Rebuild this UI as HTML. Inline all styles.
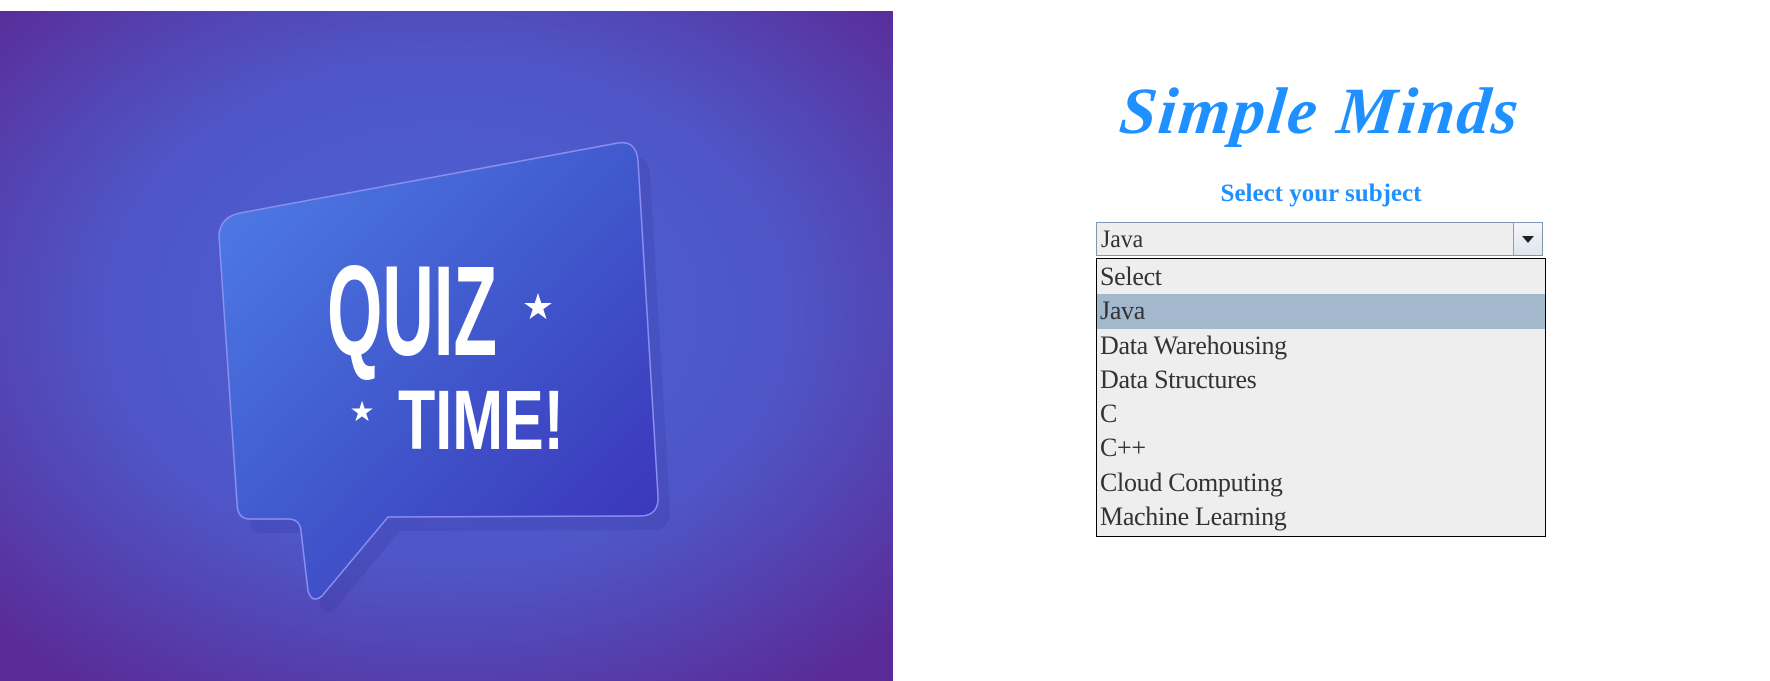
<!DOCTYPE html>
<html><head><meta charset="utf-8"><style>
html,body{margin:0;padding:0;background:#fff;width:1770px;height:681px;overflow:hidden;position:relative}
#img{position:absolute;left:0;top:11px}
.t{position:absolute;font-family:"Liberation Serif",serif}
#title{left:1110px;top:74px;width:420px;text-align:center;color:#1e90ff;font-size:66px;font-style:italic;font-weight:bold;letter-spacing:2px;transform:skewX(-6deg)}
#sub{left:1096px;top:180px;width:450px;text-align:center;color:#1e90ff;font-size:25px;font-weight:bold}
#combo{position:absolute;left:1096px;top:222px;width:447px;height:34px;background:#eeeeee;border:1px solid #7f97b3;box-sizing:border-box}
#combo span{position:absolute;left:4px;top:3px;font:25px "Liberation Serif",serif;color:#333;transform:scaleX(0.95);transform-origin:left}
#btn{position:absolute;right:0;top:0;width:28px;height:32px;border-left:1px solid #8aa0b8;background:linear-gradient(#f4f6f9,#dfe6ee)}
#btn:after{content:"";position:absolute;left:8px;top:13px;border-left:6px solid transparent;border-right:6px solid transparent;border-top:7px solid #222}
#list{position:absolute;left:1096px;top:258px;width:450px;height:279px;background:#eeeeee;border:1px solid #000;box-sizing:border-box;padding-top:1px}
#list div{height:34.3px;font:26px/34px "Liberation Serif",serif;color:#333;padding-left:3px;letter-spacing:-0.3px}
#list .sel{background:#a3b8cc}
</style></head><body>
<svg id="img" width="893" height="670" viewBox="0 0 893 670">
<defs>
<radialGradient id="bg" cx="50%" cy="45%" r="70%">
<stop offset="0" stop-color="#4a63d6"/><stop offset="0.55" stop-color="#4f55c6"/><stop offset="1" stop-color="#5a2a96"/>
</radialGradient>
<linearGradient id="bb" x1="0" y1="0" x2="1" y2="1">
<stop offset="0" stop-color="#4f7fe8"/><stop offset="0.5" stop-color="#4058cc"/><stop offset="1" stop-color="#3a2fb8"/>
</linearGradient>
</defs>
<rect width="893" height="670" fill="url(#bg)"/>
<path d="M219 225 Q220 206 240 202 L618 132 Q636 129 638 150 L658 485 Q659 505 640 505 L388 506 L322 585 Q312 593 308 580 L301 520 Q300 508 288 508 L250 508 Q237 508 237 492 Z" fill="#2b2a8e" opacity="0.18" transform="translate(12,14)"/>
<path d="M219 225 Q220 206 240 202 L618 132 Q636 129 638 150 L658 485 Q659 505 640 505 L388 506 L322 585 Q312 593 308 580 L301 520 Q300 508 288 508 L250 508 Q237 508 237 492 Z" fill="url(#bb)" stroke="#8d8ff0" stroke-width="1.5"/>
<text x="327" y="344" font-family="Liberation Sans Narrow,Liberation Sans,sans-serif" font-weight="bold" font-size="128" fill="#fff" textLength="170" lengthAdjust="spacingAndGlyphs">QUIZ</text>
<text x="398" y="438" font-family="Liberation Sans Narrow,Liberation Sans,sans-serif" font-weight="bold" font-size="84" fill="#fff" textLength="166" lengthAdjust="spacingAndGlyphs">TIME!</text>
<text x="538" y="308" font-size="36" fill="#fff" text-anchor="middle" font-family="DejaVu Sans,sans-serif">★</text>
<text x="362" y="410" font-size="28" fill="#fff" text-anchor="middle" font-family="DejaVu Sans,sans-serif">★</text>
</svg>
<div class="t" id="title">Simple Minds</div>
<div class="t" id="sub">Select your subject</div>
<div id="combo"><span>Java</span><div id="btn"></div></div>
<div id="list">
<div>Select</div><div class="sel">Java</div><div>Data Warehousing</div><div>Data Structures</div><div>C</div><div>C++</div><div>Cloud Computing</div><div>Machine Learning</div>
</div>
</body></html>
